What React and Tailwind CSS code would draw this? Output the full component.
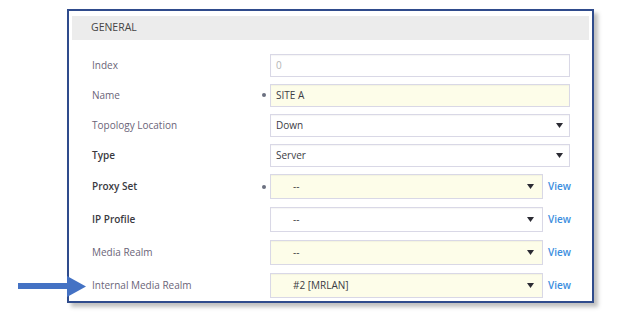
import React from "react";

const font = { fontFamily: '"Open Sans", "Noto Sans", sans-serif' };

function Caret() {
  return (
    <svg width="7" height="5" viewBox="0 0 7 5" className="shrink-0">
      <path d="M0 0 L7 0 L3.5 5 Z" fill="#2b2b33" />
    </svg>
  );
}

function Row({ label, strong, dot, children, tall }) {
  return (
    <div className={`flex items-center ${tall ? "h-[33px]" : "h-[30px]"}`}>
      <div
        className={`w-[189px] pl-[23px] text-[10px] ${
          strong ? "text-[#3a3a3f] font-semibold" : "text-[#6a6478]"
        }`}
      >
        {label}
      </div>
      <div className="w-[12px] flex items-center justify-center">
        {dot && <div className="w-[4px] h-[4px] rounded-full bg-[#6b7080]" />}
      </div>
      {children}
    </div>
  );
}

function Field({ text, yellow, light, select, w = "w-[300px]", h = "h-[23px]", center }) {
  return (
    <div
      className={`${w} ${h} flex items-center border border-[#d9d8e6] shadow-[inset_0_1px_1px_rgba(0,0,0,0.04)] ${
        yellow ? "bg-[#fdfde9]" : "bg-white"
      } ${center ? "pl-[22px] pr-[8px]" : "pl-[5px] pr-[6px]"}`}
    >
      <span
        className={`flex-1 text-[10px] ${light ? "text-[#b5b5b5]" : "text-[#3c3c44]"}`}
      >
        {text}
      </span>
      {select && <Caret />}
    </div>
  );
}

function ViewField({ text, yellow }) {
  return (
    <div className="flex items-center">
      <Field text={text} yellow={yellow} select w="w-[273px]" h="h-[25px]" center />
      <span className="ml-[5px] text-[10px] font-semibold text-[#3b8ede]">View</span>
    </div>
  );
}

export default function App() {
  return (
    <div className="w-[622px] h-[313px] bg-white relative overflow-hidden" style={font}>
      <div className="ml-[67px] mt-[9px] w-[527px] h-[294px] border-2 border-[#2f4b8c] bg-white shadow-[4px_4px_4px_rgba(0,0,0,0.25)] overflow-hidden">
        <div className="pt-[5px] px-[3px]">
          <div className="h-[24px] bg-[#ececec] flex items-center pl-[19px] text-[10.5px] text-[#444]">
            GENERAL
          </div>
        </div>
        <div className="mt-[10px]">
          <Row label="Index">
            <Field text="0" light />
          </Row>
          <Row label="Name" dot>
            <Field text="SITE A" yellow />
          </Row>
          <Row label="Topology Location">
            <Field text="Down" select />
          </Row>
          <Row label="Type" strong>
            <Field text="Server" select />
          </Row>
          <Row label="Proxy Set" strong dot tall>
            <ViewField text="--" yellow />
          </Row>
          <Row label="IP Profile" strong tall>
            <ViewField text="--" />
          </Row>
          <Row label="Media Realm" tall>
            <ViewField text="--" yellow />
          </Row>
          <Row label="Internal Media Realm" tall>
            <ViewField text="#2 [MRLAN]" yellow />
          </Row>
        </div>
      </div>
      <svg
        className="absolute left-[18px] top-[276px]"
        width="70"
        height="21"
        viewBox="0 0 70 21"
      >
        <rect x="0" y="7" width="50" height="6" fill="#4472c4" />
        <path d="M49 0 L68 10.5 L49 21 Z" fill="#4472c4" />
      </svg>
    </div>
  );
}
